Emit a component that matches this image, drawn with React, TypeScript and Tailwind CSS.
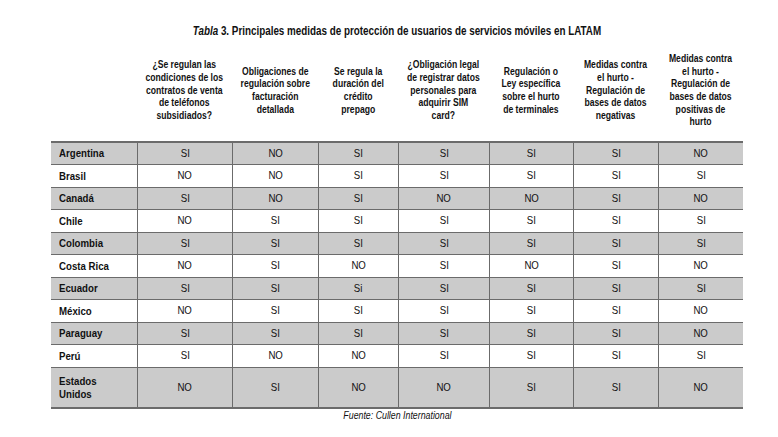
const font = { fontFamily: '"Liberation Sans", Arial, sans-serif' }

type Row = { country: string[]; values: string[]; shaded: boolean; height: string }

const headers: string[][] = [
  ['¿Se regulan las', 'condiciones de los', 'contratos de venta', 'de teléfonos', 'subsidiados?'],
  ['Obligaciones de', 'regulación sobre', 'facturación', 'detallada'],
  ['Se regula la', 'duración del', 'crédito', 'prepago'],
  ['¿Obligación legal', 'de registrar datos', 'personales para', 'adquirir SIM', 'card?'],
  ['Regulación o', 'Ley específica', 'sobre el hurto', 'de terminales'],
  ['Medidas contra', 'el hurto -', 'Regulación de', 'bases de datos', 'negativas'],
  ['Medidas contra', 'el hurto -', 'Regulación de', 'bases de datos', 'positivas de', 'hurto'],
]

const rows: Row[] = [
  { country: ['Argentina'], values: ['SI', 'NO', 'SI', 'SI', 'SI', 'SI', 'NO'], shaded: true, height: 'h-[22px]' },
  { country: ['Brasil'], values: ['NO', 'NO', 'SI', 'SI', 'SI', 'SI', 'SI'], shaded: false, height: 'h-[23px]' },
  { country: ['Canadá'], values: ['SI', 'NO', 'SI', 'NO', 'NO', 'SI', 'NO'], shaded: true, height: 'h-[22px]' },
  { country: ['Chile'], values: ['NO', 'SI', 'SI', 'SI', 'SI', 'SI', 'SI'], shaded: false, height: 'h-[23px]' },
  { country: ['Colombia'], values: ['SI', 'SI', 'SI', 'SI', 'SI', 'SI', 'SI'], shaded: true, height: 'h-[22px]' },
  { country: ['Costa Rica'], values: ['NO', 'SI', 'NO', 'SI', 'NO', 'SI', 'NO'], shaded: false, height: 'h-[23px]' },
  { country: ['Ecuador'], values: ['SI', 'SI', 'Si', 'SI', 'SI', 'SI', 'SI'], shaded: true, height: 'h-[22px]' },
  { country: ['México'], values: ['NO', 'SI', 'SI', 'SI', 'SI', 'SI', 'NO'], shaded: false, height: 'h-[23px]' },
  { country: ['Paraguay'], values: ['SI', 'SI', 'SI', 'SI', 'SI', 'SI', 'NO'], shaded: true, height: 'h-[22px]' },
  { country: ['Perú'], values: ['SI', 'NO', 'NO', 'SI', 'SI', 'SI', 'SI'], shaded: false, height: 'h-[23px]' },
  { country: ['Estados', 'Unidos'], values: ['NO', 'SI', 'NO', 'NO', 'SI', 'SI', 'NO'], shaded: true, height: 'h-[41px] border-b-2' },
]

const cols = 'grid grid-cols-[86px_95px_86px_80px_91px_84px_85px_85px]'

// no narrow face installed, so squeeze Liberation Sans to the Arial Narrow width
export default function App() {
  return (
    <div className="w-[778px] h-[437px] overflow-hidden bg-white text-[#111]" style={font}>
      <div className="ml-[51px] w-[692px] pt-[23px]">
        <div className="flex justify-center">
          <h1 className="w-max shrink-0 whitespace-nowrap text-[12px] font-bold leading-[16px] scale-x-[0.82]">
            <i>Tabla</i> 3. Principales medidas de protección de usuarios de servicios móviles en LATAM
          </h1>
        </div>

        {/* header */}
        <div className={`${cols} h-[102px] items-center`}>
          <div />
          {headers.map((lines, i) => (
            <div key={i} className="flex justify-center">
              <div className="w-max shrink-0 whitespace-nowrap text-center text-[10.5px] font-bold leading-[12.7px] scale-x-[0.82]">
                {lines.map((l, j) => (
                  <div key={j}>{l}</div>
                ))}
              </div>
            </div>
          ))}
        </div>

        {/* body */}
        <div className="border-t-2 border-[#6b6b6b]">
          {rows.map((r) => (
            <div
              key={r.country.join(' ')}
              className={`${cols} ${r.height} border-b border-[#6b6b6b] ${r.shaded ? 'bg-[#cbcbcb]' : 'bg-white'}`}
            >
              <div className="flex flex-col justify-center pl-2">
                <div className="w-max origin-left whitespace-nowrap text-[11.5px] font-bold leading-[13px] scale-x-[0.84]">
                  {r.country.map((c) => (
                    <div key={c}>{c}</div>
                  ))}
                </div>
              </div>
              {r.values.map((v, i) => (
                <div key={i} className="flex items-center justify-center border-l border-[#6b6b6b]">
                  <span className="inline-block text-[11.5px] scale-x-[0.84]">{v}</span>
                </div>
              ))}
            </div>
          ))}
        </div>

        <div className="mt-[1px] flex justify-center">
          <div className="w-max whitespace-nowrap text-[10px] italic leading-[12px] scale-x-[0.88]">
            Fuente: Cullen International
          </div>
        </div>
      </div>
    </div>
  )
}
